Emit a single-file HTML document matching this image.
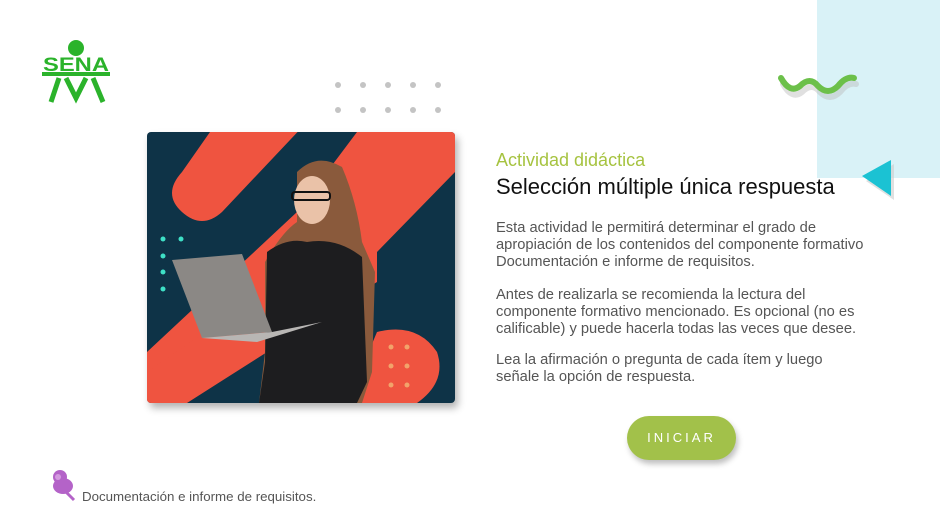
<!DOCTYPE html>
<html><head><meta charset="utf-8"><style>
body{margin:0;width:940px;height:528px;background:#fff;position:relative;overflow:hidden;font-family:"Liberation Sans",sans-serif}
.a{position:absolute}
p{margin:0}
</style></head><body>
<div class="a" style="left:817px;top:0;width:123px;height:178px;background:#d9f2f7"></div>
<svg class="a" style="left:770px;top:66px" width="95" height="40"><path d="M11 14 Q20 30 30 22 Q40 12 48 22 Q58 32 68 22 Q76 12 84 14" fill="none" stroke="#bbb" stroke-width="6" stroke-linecap="round" opacity=".45" transform="translate(2,4)"/><path d="M11 12 Q20 28 30 20 Q40 10 48 20 Q58 30 68 20 Q76 10 84 12" fill="none" stroke="#6cc04a" stroke-width="6" stroke-linecap="round"/></svg>
<svg class="a" style="left:855px;top:155px" width="45" height="48"><polygon points="9,23 37,6 37,42" fill="#ccc" opacity=".6" transform="translate(2,3)"/><polygon points="7,21 36,5 36,41" fill="#1bc2d3"/></svg>
<svg class="a" style="left:40px;top:38px" width="75" height="72">
<circle cx="36" cy="10" r="8" fill="#2bb32b"/>
<text x="3" y="33" font-family="Liberation Sans" font-weight="bold" font-size="19" fill="#2bb32b" textLength="66" lengthAdjust="spacingAndGlyphs">SENA</text>
<rect x="2" y="34" width="68" height="4" fill="#2bb32b"/>
<path d="M19 40 L11 64 M26 40 L36 60 L46 40 M53 40 L63 64" stroke="#2bb32b" stroke-width="5" fill="none"/>
</svg>
<svg class="a" style="left:330px;top:78px" width="120" height="40">
<g fill="#c4c4c4"><circle cx="8" cy="7" r="3"/><circle cx="33" cy="7" r="3"/><circle cx="58" cy="7" r="3"/><circle cx="83" cy="7" r="3"/><circle cx="108" cy="7" r="3"/><circle cx="8" cy="32" r="3"/><circle cx="33" cy="32" r="3"/><circle cx="58" cy="32" r="3"/><circle cx="83" cy="32" r="3"/><circle cx="108" cy="32" r="3"/></g></svg>
<div class="a" style="left:147px;top:132px;width:308px;height:271px;border-radius:4px;box-shadow:3px 5px 8px rgba(0,0,0,.3);overflow:hidden;background:#0e3347">
<svg width="308" height="271">
<path d="M70 -10 L160 -10 L75 80 Q55 98 35 80 Q15 62 35 40 Z" fill="#ef5440"/>
<path d="M210 0 L308 0 L308 40 L230 120 L230 130 Q200 150 180 140 L0 271 L0 220 L150 80 Z" fill="#ef5440"/>
<path d="M160 130 L230 60 L230 150 L40 271 L0 271 L0 240 Z" fill="#ef5440"/>
<path d="M230 200 Q270 190 290 220 Q300 250 270 271 L200 271 Z" fill="#ef5440"/>
<g fill="#3ee0c6"><circle cx="16" cy="107" r="2.5"/><circle cx="34" cy="107" r="2.5"/><circle cx="16" cy="124" r="2.5"/><circle cx="16" cy="140" r="2.5"/><circle cx="16" cy="157" r="2.5"/></g>
<g fill="#f2a36a"><circle cx="244" cy="215" r="2.5"/><circle cx="260" cy="215" r="2.5"/><circle cx="244" cy="234" r="2.5"/><circle cx="260" cy="234" r="2.5"/><circle cx="244" cy="253" r="2.5"/><circle cx="260" cy="253" r="2.5"/></g>
<path d="M150 40 Q170 20 195 35 Q210 70 215 110 L228 140 L225 240 L215 271 L112 271 L118 220 L118 130 Q135 100 150 90 Z" fill="#8a5a3c"/>
<path d="M120 120 Q140 105 160 110 Q190 105 215 125 L220 250 L210 271 L112 271 L118 230 Z" fill="#1d1d1f"/>
<ellipse cx="165" cy="68" rx="18" ry="24" fill="#eac2a8"/>
<rect x="145" y="60" width="38" height="8" rx="3" fill="none" stroke="#111" stroke-width="2"/>
<path d="M25 128 L95 122 L125 200 L55 206 Z" fill="#8b8885"/>
<path d="M55 206 L125 200 L175 190 L110 210 Z" fill="#b8b6b4"/>
</svg></div>
<p class="a" style="left:496px;top:150px;font-size:18px;color:#a6c340">Actividad didáctica</p>
<p class="a" style="left:496px;top:174px;font-size:22px;color:#111">Selección múltiple única respuesta</p>
<div class="a" style="left:496px;top:220px;width:370px;font-size:14.7px;line-height:17px;color:#555">
<p>Esta actividad le permitirá determinar el grado de apropiación de los contenidos del componente formativo Documentación e informe de requisitos.</p>
<p style="margin-top:16px">Antes de realizarla se recomienda la lectura del componente formativo mencionado. Es opcional (no es calificable) y puede hacerla todas las veces que desee.</p>
<p style="margin-top:14px">Lea la afirmación o pregunta de cada ítem y luego señale la opción de respuesta.</p></div>
<div class="a" style="left:627px;top:416px;width:109px;height:44px;border-radius:22px;background:#a2c14a;box-shadow:2px 4px 6px rgba(0,0,0,.25);color:#fff;font-size:13px;letter-spacing:3px;text-align:center;line-height:44px">INICIAR</div>
<svg class="a" style="left:48px;top:467px" width="30" height="36"><circle cx="12" cy="10" r="7" fill="#b463c8"/><ellipse cx="15" cy="19" rx="10" ry="8" fill="#b463c8"/><path d="M18 25 L26 33" stroke="#b463c8" stroke-width="3"/><circle cx="10" cy="10" r="3" fill="#d49ae0"/></svg>
<p class="a" style="left:82px;top:489px;font-size:13.3px;color:#555">Documentación e informe de requisitos.</p>
</body></html>
